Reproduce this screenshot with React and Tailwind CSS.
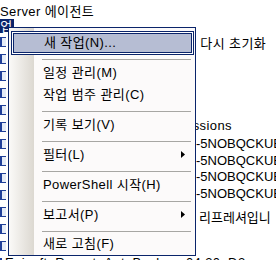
import { useState } from "react";

const treeRows = 13;

function TreeIcon() {
  return (
    <div className="w-[6px] h-[10px] border-l-2 border-y border-[#1f3f99] bg-[#e4ebf7]" />
  );
}

function Arrow() {
  return (
    <svg width="4" height="7" viewBox="0 0 4 7" className="ml-auto mr-[10px]">
      <path d="M0 0 L4 3.5 L0 7 Z" fill="#000" />
    </svg>
  );
}

function Separator() {
  return (
    <div className="h-[8px] flex items-center pl-[33px] pr-[4px]">
      <div className="h-px w-full bg-[#a7a6a3]" />
    </div>
  );
}

function Item({ label, sub, last }) {
  return (
    <div className={`${last ? "h-[20px]" : "h-[22px]"} flex items-center pl-[34px] pb-[3px]`}>
      <span>{label}</span>
      {sub && <Arrow />}
    </div>
  );
}

export default function App() {
  const [open] = useState(true);

  return (
    <div className="relative w-[276px] h-[260px] overflow-hidden bg-white text-[13px] leading-none tracking-[0.4px] text-black font-['Liberation_Sans','Noto_Sans_CJK_KR',sans-serif]">
      <div className="flex">
        {/* tree pane */}
        <div className="w-[190px] shrink-0">
          <div className="h-[19px] pt-[5px] whitespace-nowrap">Server 에이전트</div>
          <div className="h-[14px] flex">
            <span className="-ml-[13px] px-[1px] h-[14px] flex items-center bg-[#0a246a] text-white">작업</span>
          </div>
          {Array.from({ length: treeRows }).map((_, i) => (
            <div key={i} className="h-[17px] flex items-center">
              <TreeIcon />
            </div>
          ))}
          <div className="h-[17px] flex items-center gap-[3px] whitespace-nowrap">
            <TreeIcon />
            <span>Episoft_Report_AutoBackup_04:30_D2</span>
          </div>
        </div>

        {/* list pane */}
        <div className="flex-1 whitespace-nowrap">
          <div className="h-[37px]" />
          <div className="h-[16px] -ml-[6px]">를 다시 초기화</div>
          <div className="h-[66px]" />
          <div className="h-[18px] -ml-[14px]">Sessions</div>
          {["", "", "", ""].map((_, i) => (
            <div key={i} className="h-[16.5px] ml-[6px] tracking-normal">-5NOBQCKUB</div>
          ))}
          <div className="h-[8px]" />
          <div className="h-[16px] ml-[9px] tracking-normal">리프레셔입니</div>
        </div>
      </div>

      {open && (
        <div className="absolute left-[8px] top-[27px] w-[188px] h-[229px] border border-[#0a246a] bg-[#fcfafa] flex">
          <div className="w-[25px] h-full bg-gradient-to-r from-[#fbfaf8] to-[#dcd8d1]" />
          <div className="absolute inset-0 pt-[3px]">
            <div className="ml-[2px] mr-[1px] h-[24px] border border-[#0a246a] p-px bg-white">
              <div className="h-full border border-[#0a246a] bg-[#b6bdd3] flex items-center pl-[30px] pb-[2px]">
                새 작업(N)...
              </div>
            </div>
            <Separator />
            <Item label="일정 관리(M)" />
            <Item label="작업 범주 관리(C)" />
            <Separator />
            <Item label="기록 보기(V)" />
            <Separator />
            <Item label="필터(L)" sub />
            <Separator />
            <Item label="PowerShell 시작(H)" />
            <Separator />
            <Item label="보고서(P)" sub />
            <Separator />
            <Item label="새로 고침(F)" last />
          </div>
        </div>
      )}
    </div>
  );
}
